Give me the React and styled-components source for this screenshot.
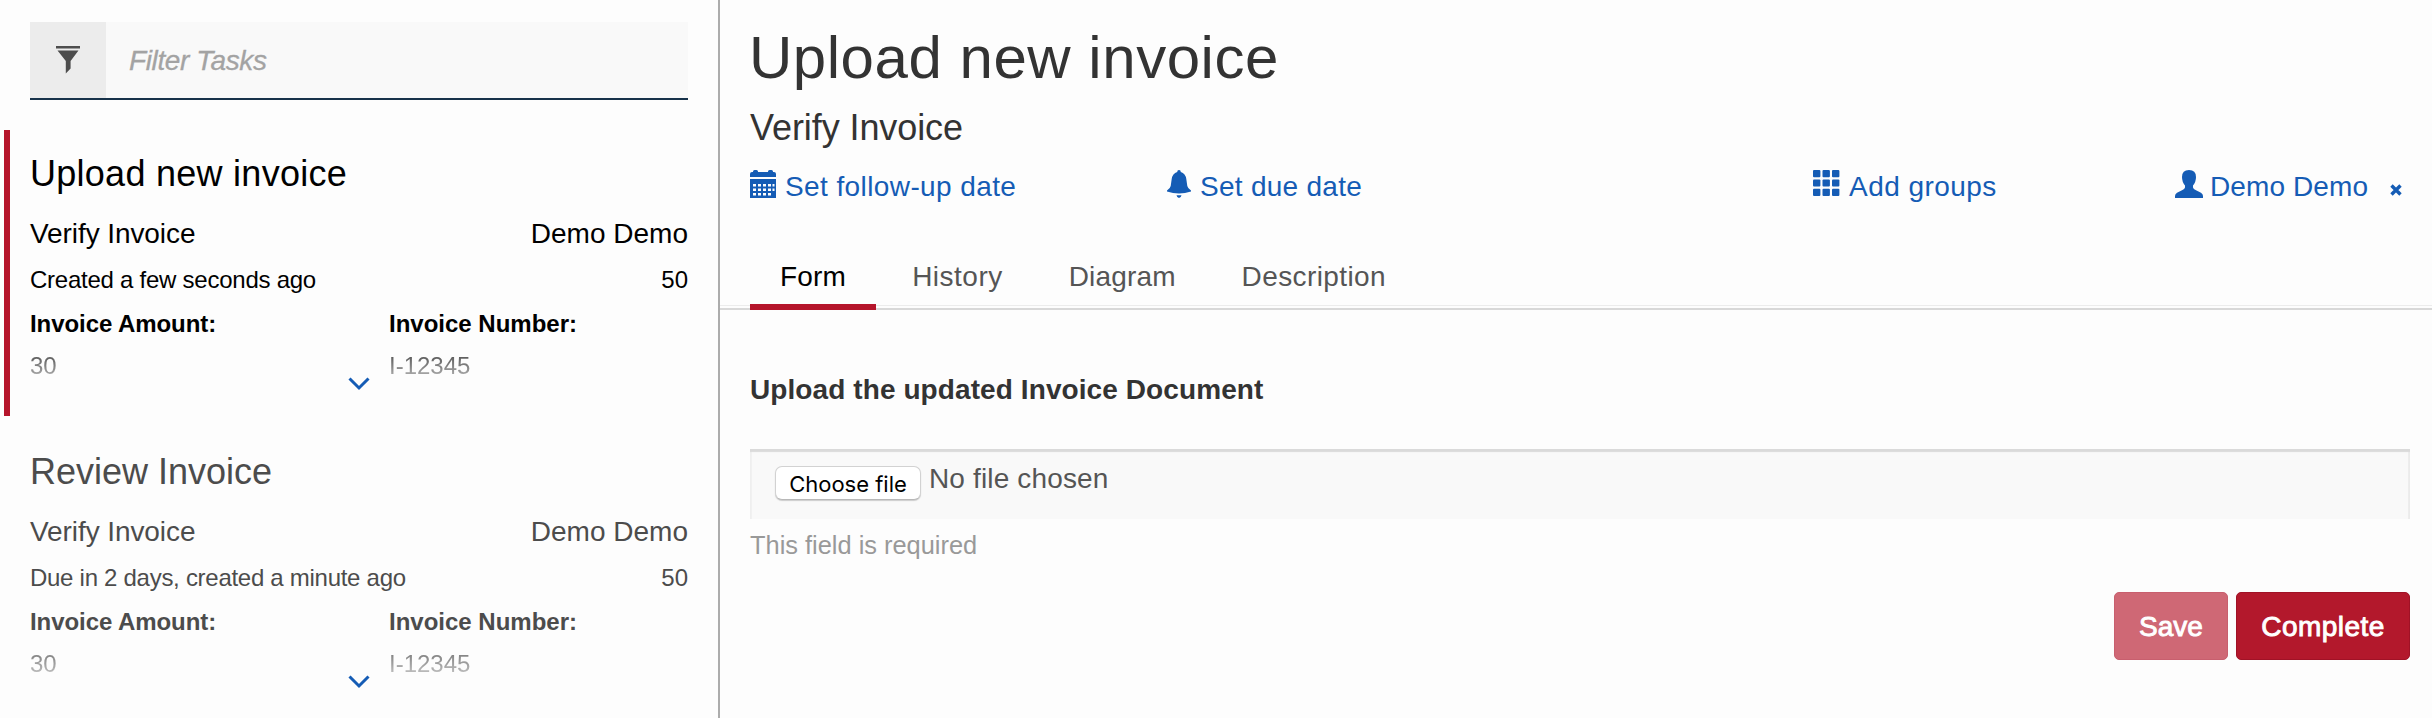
import React from "react";
import styled, { createGlobalStyle } from "styled-components";

const Global = createGlobalStyle`
  * { box-sizing: border-box; }
  body { margin: 0; background: #fdfdfd; font-family: "Liberation Sans", Arial, sans-serif; font-size: 28px; line-height: 40px; color: #333; }
  button, input { font-family: inherit; }
`;

const Layout = styled.div`
  display: flex;
  height: 718px;
  overflow: hidden;
`;
const Sidebar = styled.aside`
  width: 720px;
  flex: none;
  border-right: 2px solid #acacac;
  padding-top: 22px;
`;
const Filter = styled.div`
  display: flex;
  height: 78px;
  margin: 0 30px 30px;
  border-bottom: 2px solid #17324a;
  background: #f9f9f9;
`;
const FilterIcon = styled.div`
  width: 76px;
  display: flex;
  justify-content: center;
  padding-top: 24px;
  background: #ececec;
`;
const Placeholder = styled.span`
  padding: 19px 0 0 23px;
  font-style: italic;
  color: #a3a3a3;
  letter-spacing: -0.38px;
  -webkit-text-stroke: 0.3px #a3a3a3;
`;
const Task = styled.article`
  height: 286px;
  margin: 0 30px 12px 4px;
  padding: 19px 0 0 20px;
  border-left: 6px solid ${(p) => (p.$active ? "#b5152b" : "transparent")};
  color: ${(p) => (p.$active ? "#000" : "#4c4c4c")};
`;
const TaskTitle = styled.h4`
  margin: 0 0 15px;
  font-size: 36px;
  line-height: 50px;
  font-weight: 400;
`;
const Row = styled.div`
  display: flex;
  justify-content: space-between;
  font-size: ${(p) => (p.$small ? 24 : 28)}px;
  line-height: ${(p) => (p.$small ? 34 : 40)}px;
  margin-bottom: ${(p) => (p.$small ? 10 : 9)}px;
`;
const Variables = styled.dl`
  display: grid;
  grid-template-columns: 359px 1fr;
  row-gap: 8px;
  margin: 0;
  font-size: 24px;
  line-height: 34px;
`;
const VarName = styled.dt`
  font-weight: 700;
`;
const VarValue = styled.dd`
  margin: 0;
  color: #333;
  opacity: ${(p) => (p.$active ? 1 : 0.75)};
  mask-image: linear-gradient(rgba(0, 0, 0, 0.95), rgba(0, 0, 0, 0.4) 80%);
`;
const Expand = styled.div`
  display: flex;
  justify-content: center;
  margin-top: -6px;
`;
const Text = styled.span`
  letter-spacing: ${(p) => p.$track || 0}px;
`;

const Main = styled.main`
  flex: 1;
  min-width: 0;
  padding-top: 23px;
`;
const Heading = styled.h2`
  margin: 0 29px 10px;
  font-size: 60px;
  line-height: 70px;
  font-weight: 400;
`;
const SubHeading = styled.h3`
  margin: 0 30px 13px;
  font-size: 36px;
  line-height: 50px;
  font-weight: 400;
`;
const Actions = styled.div`
  display: grid;
  grid-template-columns: 417px 646px 362px 1fr;
  margin: 0 0 0 30px;
`;
const Action = styled.a`
  display: flex;
  height: 40px;
  color: #155cb5;
  svg { flex: none; margin-top: 4px; }
`;
const ActionLabel = styled(Text)`
  margin-left: ${(p) => p.$gap}px;
  padding-top: 1px;
`;
const Tabs = styled.nav`
  display: flex;
  gap: 6px;
  height: 104px;
  padding: 44px 30px 0;
  box-shadow: inset 0 -2px #d8d8d8, inset 0 -4px #fdfdfd, inset 0 -5px #ececec;
`;
const Tab = styled.a`
  padding: 7px 30px 0;
  color: ${(p) => (p.$active ? "#000" : "#555")};
  border-bottom: ${(p) => (p.$active ? "6px solid #b5152b" : "0")};
`;
const Form = styled.form`
  padding: 60px 22px 0 30px;
`;
const Label = styled.label`
  display: block;
  font-weight: 700;
  margin-bottom: 39px;
`;
const FileField = styled.div`
  display: flex;
  height: 70px;
  padding: 17px 0 0 25px;
  color: #555;
  background: #f9f9f9;
  box-shadow: inset 0 3px 1px #dadada, inset 2px 0 #f1f1f1, inset -2px 0 #ededed;
`;
const FileButton = styled.button`
  width: 146px;
  height: 34px;
  margin-right: 8px;
  padding: 0;
  border: 1px solid #d2d2d2;
  border-bottom-color: #b8b8b8;
  border-radius: 7px;
  background: #fff;
  box-shadow: 0 1px 1px #ccc;
  font-family: Inter, "Liberation Sans", sans-serif;
  font-size: 22px;
  line-height: 34px;
  color: #000;
`;
const FileName = styled(Text)`
  line-height: 25px;
`;
const Help = styled.p`
  margin: 9px 0 30px;
  font-size: 25.4px;
  line-height: 34px;
  color: #999;
`;
const Buttons = styled.div`
  display: flex;
  justify-content: flex-end;
  gap: 8px;
`;
const Button = styled.button`
  width: ${(p) => p.$width}px;
  height: 68px;
  padding: 1px 0 0;
  border: 1px solid ${(p) => (p.$muted ? "#c85f6e" : "#a01226")};
  border-radius: 5px;
  background: ${(p) => (p.$muted ? "#cf6875" : "#b3182c")};
  color: #fff;
  font-size: 28px;
  line-height: 65px;
  -webkit-text-stroke: 0.9px #fff;
`;

const Funnel = () => (
  <svg width="24" height="28" viewBox="0 0 24 28" fill="#4d4d4d">
    <path d="M0 0H24V2.400H0zM1.500 4.500H22.500L14.600 15V22.500L9.800 27.500V15z" />
  </svg>
);
const Chevron = () => (
  <svg width="22" height="14" viewBox="0 0 22 14" fill="none" stroke="#155cb5" strokeWidth="3">
    <path d="M1.500 1.500L11 11L20.500 1.500" />
  </svg>
);
const Calendar = () => (
  <svg width="26" height="29" viewBox="0 0 26 29" fill="#155cb5">
    <path d="M0 7V4Q0 2 2 2H3V1.500Q3 0 4.500 0H6.500Q8 0 8 1.500V2H18V1.500Q18 0 19.500 0H21.500Q23 0 23 1.500V2H24Q26 2 26 4V7z" />
    <path fillRule="evenodd" d="M0 9H26V28H0zM3 14V16.500H6V14zM8 14V16.500H11V14zM13 14V16.500H16V14zM18 14V16.500H21V14zM22.500 14V16.500H24.500V14zM3 18.500V21H6V18.500zM8 18.500V21H11V18.500zM13 18.500V21H16V18.500zM18 18.500V21H21V18.500zM22.500 18.500V21H24.500V18.500zM3 23V25.500H6V23zM8 23V25.500H11V23zM13 23V25.500H16V23zM18 23V25.500H21V23z" />
  </svg>
);
const Bell = () => (
  <svg width="24" height="28" viewBox="0 0 24 28" fill="#155cb5">
    <path d="M10.200 2Q10.200 0 12 0T13.800 2Q18.500 3.500 19.300 9L20.300 16Q20.800 18.500 24 20.500V21.500Q18 23.500 12 23.500T0 21.500V20.500Q3.200 18.500 3.700 16L4.700 9Q5.500 3.500 10.200 2zM9.500 25.300H14.500Q14 28 12 28T9.500 25.300z" />
  </svg>
);
const Grid = () => (
  <svg width="27" height="27" viewBox="0 0 27 27" fill="#155cb5">
    {[0, 9.4, 18.8].map((y) =>
      [0, 9.5, 19].map((x) => <rect key={x + "-" + y} x={x} y={y} width="7.400" height="7.200" rx="1" />)
    )}
  </svg>
);
const User = () => (
  <svg width="28" height="28" viewBox="0 0 28 28" fill="#155cb5">
    <path d="M14 0Q21 0 21 7Q21 12 18 15.500V17.500Q18.300 19 21 20.200L26 22.800Q28 24 28 26V28H0V26Q0 24 2 22.800L7 20.200Q9.700 19 10 17.500V15.500Q7 12 7 7Q7 0 14 0z" />
  </svg>
);
const Remove = styled.span`
  display: flex;
  margin-left: 22px;
  padding-top: 14px;
`;
const Cross = () => (
  <svg width="12" height="12" viewBox="0 0 12 12" stroke="#155cb5" strokeWidth="3.400">
    <path d="M1.500 1.500L10.500 10.500M10.500 1.500L1.500 10.500" />
  </svg>
);

const tasks = [
  { title: "Upload new invoice", track: 0.27, when: "Created a few seconds ago", whenTrack: -0.25, active: true },
  { title: "Review Invoice", track: 0, when: "Due in 2 days, created a minute ago", whenTrack: -0.28 },
];

export default function App() {
  return (
    <>
      <Global />
      <Layout>
        <Sidebar>
          <Filter>
            <FilterIcon><Funnel /></FilterIcon>
            <Placeholder>Filter Tasks</Placeholder>
          </Filter>
          {tasks.map((t) => (
            <Task key={t.title} $active={t.active}>
              <TaskTitle><Text $track={t.track}>{t.title}</Text></TaskTitle>
              <Row><Text $track={-0.08}>Verify Invoice</Text><Text>Demo Demo</Text></Row>
              <Row $small><Text $track={t.whenTrack}>{t.when}</Text><Text>50</Text></Row>
              <Variables>
                <VarName><Text $track={-0.07}>Invoice Amount:</Text></VarName>
                <VarName><Text>Invoice Number:</Text></VarName>
                <VarValue $active={t.active}>30</VarValue>
                <VarValue $active={t.active}><Text>I-12345</Text></VarValue>
              </Variables>
              <Expand><Chevron /></Expand>
            </Task>
          ))}
        </Sidebar>
        <Main>
          <Heading><Text $track={0.53}>Upload new invoice</Text></Heading>
          <SubHeading><Text $track={-0.08}>Verify Invoice</Text></SubHeading>
          <Actions>
            <Action><Calendar /><ActionLabel $gap={9} $track={0.4}>Set follow-up date</ActionLabel></Action>
            <Action><Bell /><ActionLabel $gap={9} $track={0.27}>Set due date</ActionLabel></Action>
            <Action><Grid /><ActionLabel $gap={9} $track={0.45}>Add groups</ActionLabel></Action>
            <Action><User /><ActionLabel $gap={7} $track={0.1}>Demo Demo</ActionLabel><Remove><Cross /></Remove></Action>
          </Actions>
          <Tabs>
            <Tab $active><Text $track={0.2}>Form</Text></Tab>
            <Tab><Text $track={0.5}>History</Text></Tab>
            <Tab><Text $track={0.15}>Diagram</Text></Tab>
            <Tab><Text $track={0.4}>Description</Text></Tab>
          </Tabs>
          <Form>
            <Label><Text $track={0.09}>Upload the updated Invoice Document</Text></Label>
            <FileField>
              <FileButton type="button">Choose file</FileButton>
              <FileName $track={0.15}>No file chosen</FileName>
            </FileField>
            <Help>This field is required</Help>
            <Buttons>
              <Button type="button" $muted $width={114}>Save</Button>
              <Button type="button" $width={174}><Text $track={0.45}>Complete</Text></Button>
            </Buttons>
          </Form>
        </Main>
      </Layout>
    </>
  );
}
